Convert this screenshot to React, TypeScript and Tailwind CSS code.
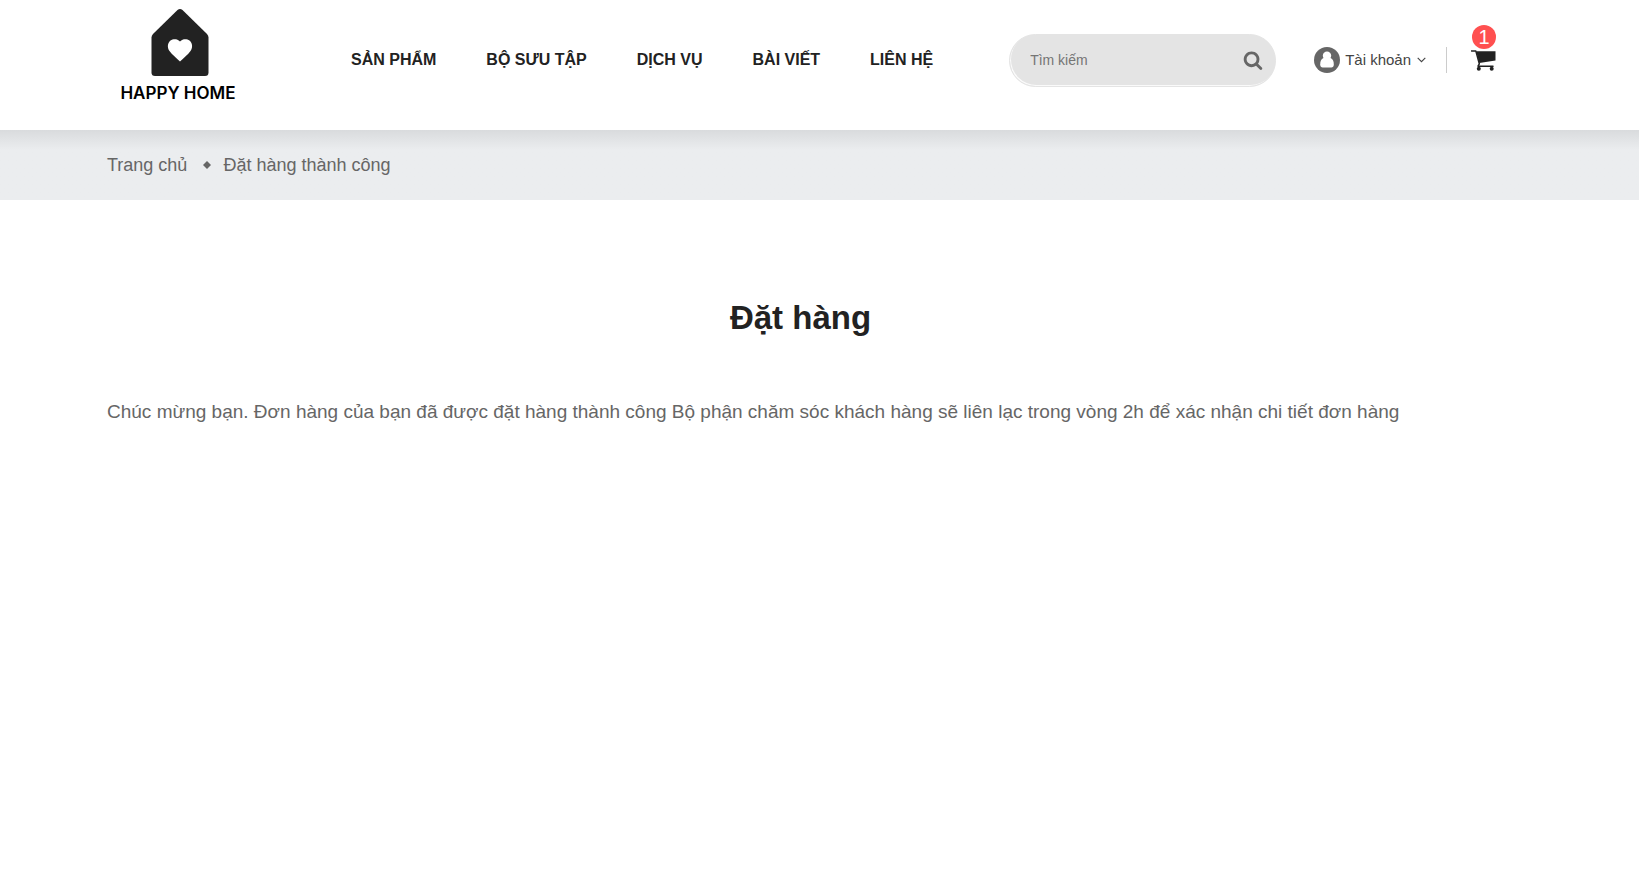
import React from "react";

const navItems = ["SẢN PHẨM", "BỘ SƯU TẬP", "DỊCH VỤ", "BÀI VIẾT", "LIÊN HỆ"];

function Logo() {
  return (
    <a href="#" className="flex w-[146px] flex-col items-center pt-2">
      <svg viewBox="0 0 58 69" className="h-[69px] w-[58px]" aria-hidden="true">
        <path
          fill="#222222"
          d="M26.5 2Q29 0 31.5 2L56 26Q57.500 27.500 57.500 29.500V64.500Q57.500 68 54 68H4Q.5 68 .5 64.500V29.500Q.5 27.500 2 26Z"
        />
        <path
          fill="#fff"
          d="M29 33.500C32 30.500 36 31 38.500 32.500C41.500 35 42 39.500 39.500 43C37 46.500 32.500 50 29 53.500C25.500 50 21 46.500 18.500 43C16 39.500 16.500 35 19.500 32.500C22 31 26 30.500 29 33.500Z"
        />
      </svg>
      <span className="mt-1 mr-1 font-['Inter',sans-serif] text-[17px] leading-6 font-semibold whitespace-nowrap text-black">
        HAPPY HOME
      </span>
    </a>
  );
}

function SearchBox() {
  return (
    <form
      className="flex h-[53px] w-[267px] items-center rounded-full border border-[#e4e4e4] bg-[#e4e4e4] pr-3 pl-5 shadow-[inset_1px_-1px_0_#fafafa]"
      onSubmit={(e) => e.preventDefault()}
    >
      <input
        type="text"
        aria-label="Tìm kiếm"
        placeholder="Tìm kiếm"
        className="min-w-0 flex-1 bg-transparent text-sm text-[#666666] outline-none placeholder:text-[#757575]"
      />
      <button type="submit" aria-label="Tìm kiếm" className="flex shrink-0">
        <svg viewBox="0 0 1792 1792" className="h-5 w-5" fill="#666666" aria-hidden="true">
          <path d="M1216 832q0-185-131.5-316.5t-316.5-131.5-316.5 131.5-131.5 316.5 131.5 316.5 316.5 131.5 316.5-131.5 131.5-316.5zm512 832q0 52-38 90t-90 38q-54 0-90-38l-343-342q-179 124-399 124-143 0-273.5-55.5t-225-150-150-225-55.5-273.5 55.5-273.5 150-225 225-150 273.5-55.5 273.5 55.5 225 150 150 225 55.5 273.5q0 220-124 399l343 343q37 37 37 90z" />
        </svg>
      </button>
    </form>
  );
}

function AccountButton() {
  return (
    <button type="button" className="flex items-center text-[15px] text-[#444444]">
      <svg viewBox="0 0 26 26" className="h-[26px] w-[26px]" aria-hidden="true">
        <circle cx="13" cy="13" r="13" fill="#666666" />
        <circle cx="13" cy="8.800" r="4.200" fill="#fff" />
        <path
          fill="#fff"
          d="M9.500 11C7 12 6.200 14.500 6.200 17.500C6.200 19.500 7.200 20.500 8.700 20.500H17.300C18.800 20.500 19.800 19.500 19.800 17.500C19.800 14.500 19 12 16.500 11Z"
        />
      </svg>
      <span className="ml-[5px] whitespace-nowrap">Tài khoản</span>
      <svg viewBox="0 0 9 6" className="ml-[6px] h-[6px] w-[9px]" aria-hidden="true">
        <path d="M.7.8L4.500 4.600L8.300.8" fill="none" stroke="#444444" strokeWidth="1.100" />
      </svg>
    </button>
  );
}

function Cart() {
  return (
    <a href="#" aria-label="Giỏ hàng" className="relative flex">
      <svg viewBox="0 0 25 21" className="h-[21px] w-[25px]" fill="#222222" aria-hidden="true">
        <path d="M5.200 1.300H24.500V10.600L8.300 13Z" />
        <path
          d="M.5 .9H4.800L8.300 13.800L7 16.200H22"
          fill="none"
          stroke="#222222"
          strokeWidth="1.500"
          strokeLinecap="round"
          strokeLinejoin="round"
        />
        <circle cx="7.800" cy="18.800" r="2" />
        <circle cx="20.700" cy="18.800" r="2" />
      </svg>
      <span className="absolute -top-[25px] left-[1px] flex h-6 w-6 items-center justify-center rounded-full bg-[#ff5050] text-xl leading-6 text-white">
        1
      </span>
    </a>
  );
}

export default function App() {
  return (
    <div className="min-h-screen bg-white font-['Liberation_Sans',Arial,sans-serif]">
      <header className="h-[130px]">
        <div className="mx-auto flex max-w-[1425px] items-start">
          <Logo />
          <div className="flex h-[120px] flex-1 items-center pl-[98px]">
            <nav className="flex gap-[50px] text-base font-bold whitespace-nowrap text-[#222222]">
              {navItems.map((item) => (
                <a key={item} href="#">
                  {item}
                </a>
              ))}
            </nav>
            <div className="ml-auto flex items-center pr-9">
              <SearchBox />
              <div className="ml-[38px] flex items-center">
                <AccountButton />
                <div className="mr-6 ml-5 h-[26px] w-px bg-[#cccccc]" />
                <Cart />
              </div>
            </div>
          </div>
        </div>
      </header>
      <section className="bg-[#ebedef] bg-linear-to-b from-[#d9dbdd] to-[#ebedef] to-[20px]">
        <nav
          aria-label="Breadcrumb"
          className="mx-auto flex h-[70px] max-w-[1425px] items-center text-lg text-[#666666]"
        >
          <a href="#">Trang chủ</a>
          <svg viewBox="0 0 8 8" className="mr-3 ml-4 h-2 w-2" fill="#666666" aria-hidden="true">
            <path d="M4 0L8 4L4 8L0 4Z" />
          </svg>
          <span>Đặt hàng thành công</span>
        </nav>
      </section>
      <main className="mx-auto max-w-[1425px] pt-[98px] pr-[38px]">
        <h1 className="text-center text-[33px] leading-10 font-bold text-[#222222]">Đặt hàng</h1>
        <p className="mt-[60px] text-[19px] leading-7 text-[#666666]">
          Chúc mừng bạn. Đơn hàng của bạn đã được đặt hàng thành công Bộ phận chăm sóc khách hàng sẽ liên lạc
          trong vòng 2h để xác nhận chi tiết đơn hàng
        </p>
      </main>
    </div>
  );
}
